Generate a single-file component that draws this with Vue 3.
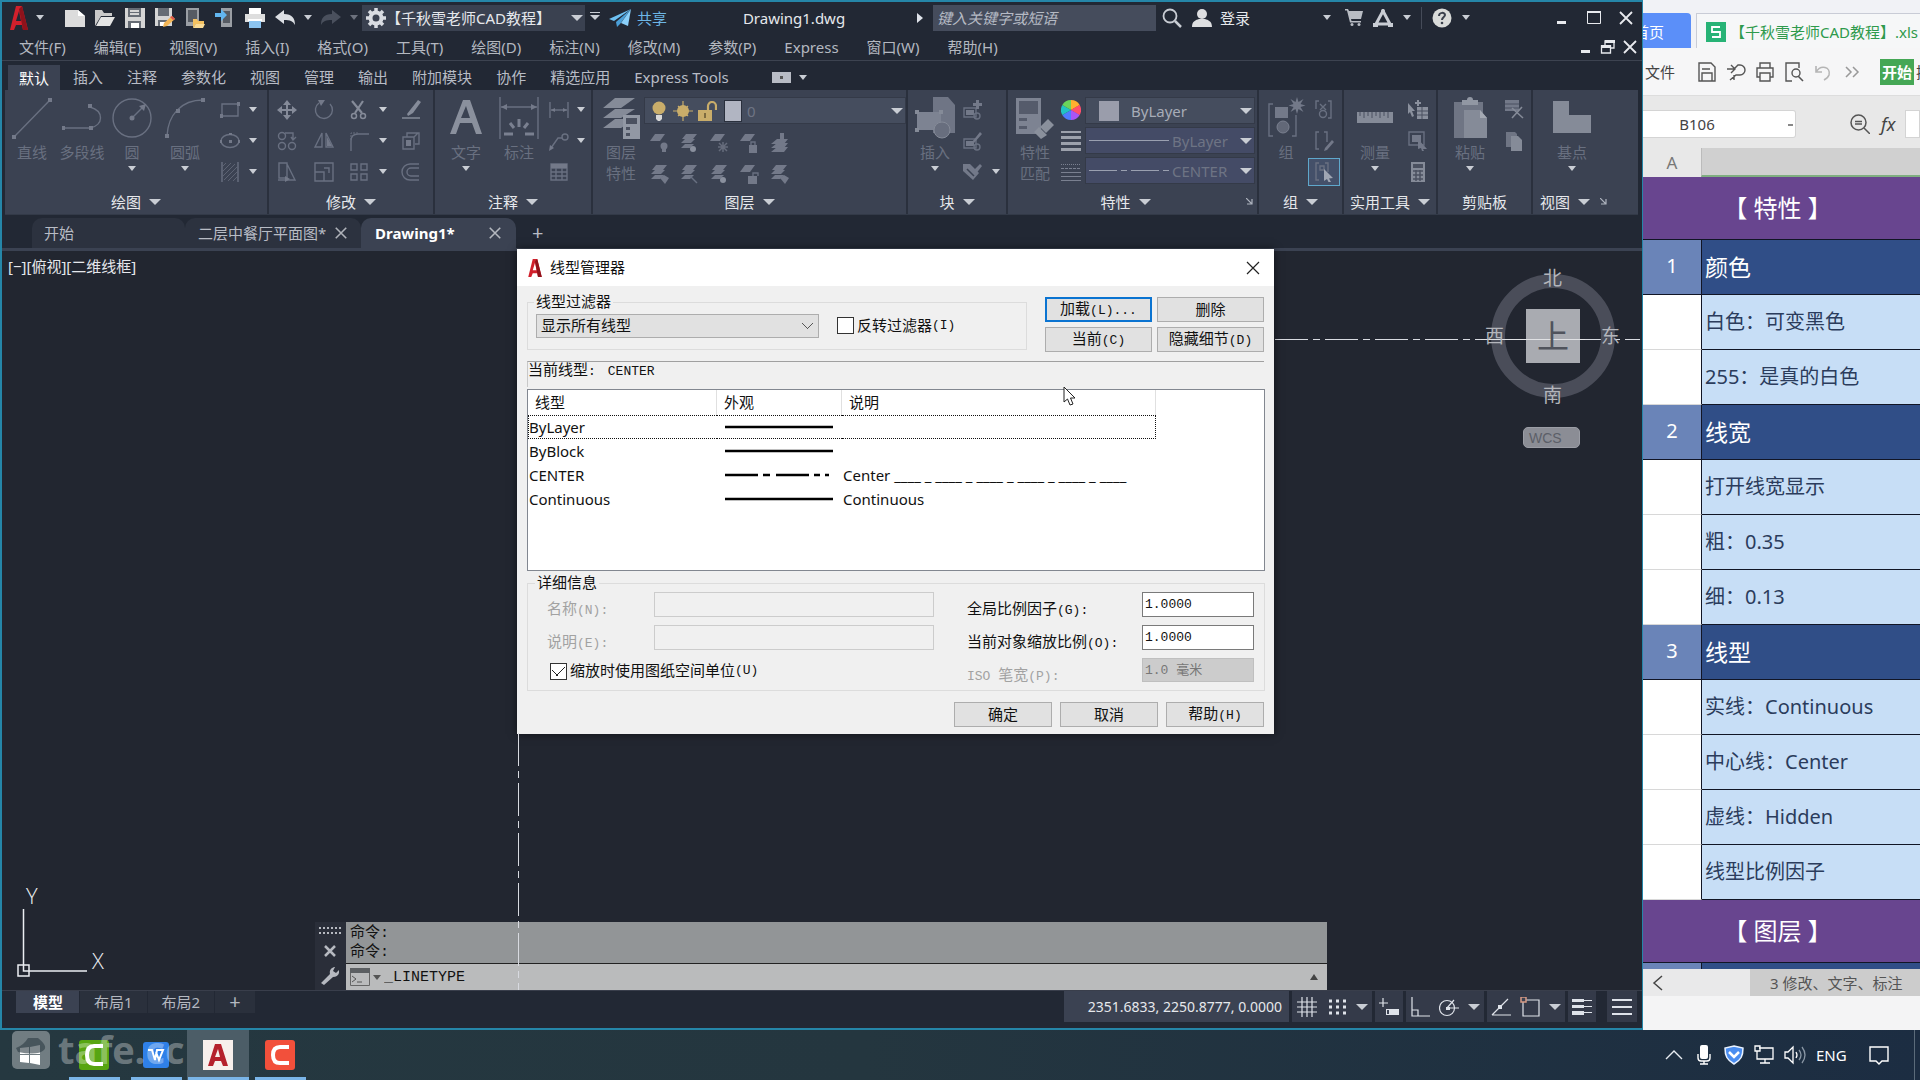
<script setup>
import { h, ref } from 'vue'

const g = 'fill="#737989"'
const s = 'fill="none" stroke="#697081" stroke-width="1.4"'
const w = 'fill="none" stroke="#dfe3ea" stroke-width="1.2"'
const sheets = `<path ${g} d="M7 1h11l-4 5H3zM6 6h10l-4 4H2zM6 11h9l-4 4H2z"/>`
const sheet = `<path ${g} d="M6 1h10l-5 7H1z"/>`

// name: [viewBox width, viewBox height, markup]
const icons = {
  // quick access bar
  logo: [18, 24, '<path fill="#d1202c" d="M6 0h6l6 24h-5l-1-5H6l-2 5H0zM9 5L6 15h5z"/><path fill="#8f121b" d="M12 0l6 24h-5L9 3z"/>'],
  new: [20, 18, '<path fill="#dcdcdc" d="M0 1h13l7 6v11H0z"/><path fill="#fff" d="M13 1v6h7z"/>'],
  open: [20, 18, '<path fill="#c9c9c9" d="M0 17V1h7l2 3h8v3H6z"/><path fill="#e4e4e4" d="M6 8h14l-5 9H1z"/>'],
  save: [20, 20, '<path fill="#d5d5d5" d="M0 0h20v20H0z"/><path fill="#666c75" d="M3 0h13v9H3zM3 13h13v7H3z"/><path fill="#d5d5d5" d="M5 2h9v2H5zM5 5h9v2H5z"/><path fill="#fff" d="M6 15h8v5H6z"/>'],
  saveas: [20, 20, '<path fill="#d5d5d5" d="M0 0h17v18H0z"/><path fill="#666c75" d="M3 0h11v8H3zM3 12h9v6H3z"/><path fill="#fff" d="M5 14h6v4H5z"/><path fill="#f3b656" d="M8 19l1-4 8-7 3 3-8 7z"/><path fill="#e0544c" d="M17 8l3 3-2 1-3-3z"/>'],
  mobile: [20, 20, '<path fill="#9a9ea4" d="M1 0h13v18H1z"/><path fill="#565b63" d="M3 2h9v12H3z"/><path fill="#f3c161" d="M8 20v-9h4l1 2h6v3H11z"/><path fill="#fadb96" d="M11 16h9l-2 4H8z"/>'],
  import: [20, 20, '<path fill="#9a9ea4" d="M6 0h11v19H6z"/><path fill="#565b63" d="M8 3h7v12H8z"/><path fill="#62b6f0" d="M0 5h6V1l6 6-6 6V9H0z"/>'],
  print: [20, 20, '<path fill="#fff" d="M4 0h12v6H4z"/><path fill="#dedede" d="M0 6h20v8H0z"/><path fill="#8cc4f0" d="M4 13h12v7H4z"/><path fill="#fff" d="M3 11h14v2H3z"/>'],
  undo: [20, 16, '<path fill="#dcdfe4" d="M0 7l9-7v4c8 0 11 4 11 11-2-4-5-5-11-5v4z"/>'],
  redo: [20, 16, '<path fill="#4a505d" d="M20 7l-9-7v4C3 4 0 8 0 15c2-4 5-5 11-5v4z"/>'],
  gear: [20, 20, '<circle cx="10" cy="10" r="5.500" fill="none" stroke="#d9dce2" stroke-width="4"/><path stroke="#d9dce2" stroke-width="3.500" d="M10 0v4M10 16v4M0 10h4M16 10h4M3 3l3 3M14 14l3 3M17 3l-3 3M6 14l-3 3"/>'],
  plane: [22, 18, '<path fill="#6dc0f2" d="M22 0L0 10l5 2z"/><path fill="#4a9fd8" d="M22 0L7 13l1 5 3-3z"/><path fill="#8bd0fa" d="M22 0l-3 17-7-3z"/>'],
  search: [20, 20, '<circle cx="8" cy="8" r="6.500" fill="none" stroke="#c9cdd4" stroke-width="1.800"/><path stroke="#c9cdd4" stroke-width="2.500" d="M13 13l6 6"/>'],
  user: [20, 18, '<circle cx="10" cy="5" r="5" fill="#dedfe1"/><path fill="#dedfe1" d="M0 18c0-6 4-7 7-8h6c3 1 7 2 7 8z"/>'],
  cart: [18, 17, '<path fill="#b8bcc3" d="M0 0h3l1 2h14l-2 8H6l.5 2H16v1.500H5L2 1.500H0z"/><circle cx="7" cy="15.500" r="1.500" fill="#b8bcc3"/><circle cx="14" cy="15.500" r="1.500" fill="#b8bcc3"/>'],
  appstore: [20, 18, '<path fill="none" stroke="#c9cdd4" stroke-width="3" d="M10 2L3 15h14z"/><circle cx="10" cy="2" r="2" fill="#c9cdd4"/><path fill="#c9cdd4" d="M0 14h5v4H0zM15 14h5v4h-5z"/>'],
  help: [20, 20, '<circle cx="10" cy="10" r="9.500" fill="#d9dbd9"/><path fill="none" stroke="#3a404c" stroke-width="2" d="M7 8c0-4 6-4 6-1 0 2-3 2-3 5"/><circle cx="10" cy="15" r="1.300" fill="#3a404c"/>'],
  min: [16, 16, '<path fill="#e8eaee" d="M3 11h9v3H3z"/>'],
  max: [16, 16, '<path fill="none" stroke="#e8eaee" d="M1.500 1.500h13v12h-13z"/><path fill="#e8eaee" d="M1 1h14v2H1z"/>'],
  close: [16, 16, '<path fill="none" stroke="#e8eaee" stroke-width="1.800" d="M2 2l12 12M14 2L2 14"/>'],
  restore: [16, 16, '<path fill="none" stroke="#e8eaee" stroke-width="1.300" d="M1.500 7h9v7h-9zM5 6V2h9v7h-3"/><path fill="#e8eaee" d="M1 6h10v3H1zM5 1h10v3H5z"/>'],
  // draw
  line: [40, 42, `<path ${s} d="M2 40L38 3"/><path ${g} d="M0 38h4v4H0zM36 1h4v4h-4z"/>`],
  pline: [40, 42, `<path ${s} d="M0 31h28C42 28 42 14 28 10"/><path ${g} d="M0 29h3v4H0zM27 29h4v4h-4zM26 7h4v4h-4z"/>`],
  circle: [40, 42, `<circle cx="20" cy="21" r="19" ${s}/><path ${s} d="M20 21L32 9"/><circle cx="20" cy="21" r="2.500" ${g}/><path ${g} d="M34 7l-2 7-5-5z"/>`],
  arc: [40, 42, `<path ${s} d="M2 39C3 18 16 3 38 3"/><path ${g} d="M0 37h4v4H0zM11 12h4v4h-4zM36 1h4v4h-4z"/>`],
  rect: [20, 20, `<path ${s} d="M2 4h16v12H2z"/><path ${g} d="M0 14h3v4H0zM17 2h3v4h-3z"/>`],
  ellipse: [20, 20, `<ellipse cx="10" cy="10" rx="9" ry="6.500" ${s}/><path ${g} d="M9 9h3v3H9zM0 9h2v3H0zM18 9h2v3h-2zM9 2h3v2H9z"/>`],
  hatch: [20, 20, `<path ${s} d="M2 0v20M18 0v20"/><path fill="none" stroke="#5d6373" d="M2 5l4-4M2 10l9-9M2 15L15 2M4 18L18 4M8 19l10-10M13 19l5-5"/>`],
  // modify
  move: [20, 20, '<path fill="none" stroke="#858b99" stroke-width="2" d="M10 2v16M2 10h16"/><path fill="#858b99" d="M10 0l4 5H6zM10 20l-4-5h8zM0 10l5-4v8zM20 10l-5 4V6z"/>'],
  rotate: [20, 20, `<path ${s} d="M5 3a8.500 8.500 0 1 0 11 1"/><path ${g} d="M4 0h7l-4 6z"/>`],
  trim: [20, 20, '<path fill="none" stroke="#858b99" stroke-width="2.200" d="M3 1l10 12M14 1L6 13"/><circle cx="5" cy="16" r="2.500" fill="none" stroke="#858b99" stroke-width="1.500"/><circle cx="14" cy="16" r="2.500" fill="none" stroke="#858b99" stroke-width="1.500"/>'],
  erase: [20, 20, '<path fill="#858b99" d="M17 0l3 2-8 11-5 3-1-2z"/><path stroke="#858b99" stroke-width="1.500" d="M1 18h18"/>'],
  copy: [20, 20, `<circle cx="5" cy="5" r="3.500" ${s}/><circle cx="5" cy="15" r="3.500" ${s}/><circle cx="15" cy="15" r="3.500" ${s}/><path ${s} d="M8 2h8v6M14 6l2 3 3-3"/>`],
  mirror: [20, 20, `<path ${s} d="M8 2v14H1zM12 2v14h7z"/><path ${g} d="M13 6l5 9h-5z"/>`],
  fillet: [20, 20, `<path ${s} d="M2 20V10Q2 3 9 3h11"/><path fill="none" stroke="#666c7c" stroke-dasharray="2 1" d="M2 9V2h7"/>`],
  explode: [20, 20, `<path ${s} d="M2 6h11v12H2zM6 6V2h12v11h-4M13 6l4-4"/><path ${g} d="M5 9h5v6H5z"/>`],
  stretch: [20, 20, `<path ${s} d="M2 1h8v15H2zM10 2l8 16H1"/><path ${g} d="M8 14l5 3-5 3z"/>`],
  scale: [20, 20, `<path ${s} d="M1 1h18v18H1zM1 10h9v9M10 6h5v5"/>`],
  array: [20, 20, `<path ${s} d="M2 2h6v6H2zM12 2h6v6h-6zM2 12h6v6H2zM12 12h6v6h-6z"/>`],
  offset: [20, 20, `<path ${s} d="M18 2H9a8 8 0 0 0 0 16h9M18 6H10a4 4 0 0 0 0 8h8"/>`],
  // annotate
  text: [40, 42, '<path fill="#8a909d" d="M17 3h7l12 34h-6l-4-11H14l-4 11H4zM20 9l-5 12h9z"/>'],
  dim: [40, 42, `<path ${s} d="M1 0v42M39 0v42M2 10h36"/><path ${g} d="M2 10l6-3v6zM38 10l-6 3V7z"/><path stroke="#7a8090" stroke-width="3" d="M20 22v8M11 26l4 5M29 26l-4 5M5 37h9M26 37h9"/>`],
  dimlin: [20, 20, `<path ${s} d="M1 2v16M19 2v16M2 10h16"/><path ${g} d="M2 10l4-2v4zM18 10l-4 2V8z"/>`],
  leader: [20, 20, `<path ${s} d="M2 17L9 7h4"/><circle cx="16" cy="6" r="3" ${s}/><path ${g} d="M0 20l1-6 4 3z"/>`],
  table: [20, 20, `<path ${s} d="M2 2h16v16H2zM2 6h16M2 10h16M2 14h16M7 6v12M13 6v12"/><path ${g} d="M2 2h16v4H2z"/>`],
  // layers
  layers: [40, 42, '<path fill="#858b98" d="M14 1h20l-14 10H2zM14 12h20l-14 9H2zM14 22h20l-14 9H2z"/><path fill="#9298a4" d="M22 18h17v24H22z"/><path fill="#4b5160" d="M25 21h11v6H25zM25 30h4v3h-4zM25 36h4v3h-4z"/>'],
  bulb: [20, 20, '<circle cx="10" cy="7" r="6.500" fill="#c9ad6a"/><path fill="#d8d8d8" d="M7 14h6v4l-2 2H9l-2-2z"/>'],
  sun: [20, 20, '<circle cx="10" cy="10" r="6" fill="#c9ad6a"/><path stroke="#c9ad6a" stroke-width="1.200" d="M10 0v20M0 10h20M5 5l10 10M15 5L5 15"/>'],
  lock: [20, 20, '<path fill="#c9ad6a" d="M1 9h14v11H1z"/><path fill="none" stroke="#c9ad6a" stroke-width="2.200" d="M11 9V5a4 4 0 0 1 8 0v4"/><path fill="#7d6b40" d="M7 12h2v5H7z"/>'],
  lay1: [20, 20, `${sheet}<circle cx="15" cy="13" r="3.500" ${g}/><path ${g} d="M13 16h4v3h-4z"/>`],
  lay2: [20, 20, `${sheets}<circle cx="14" cy="16" r="3" fill="#8a909e"/>`],
  lay3: [20, 20, `${sheet}<path stroke="#666c7c" stroke-width="1.500" d="M14 9v10M9 14h10M10 10l8 8M18 10l-8 8"/>`],
  lay4: [20, 20, `${sheet}<path ${g} d="M10 12h8v8h-8z"/><path ${s} d="M12 12V9h4v3"/>`],
  lay5: [20, 20, `<path ${g} d="M8 6h11l-4 5H2zM8 10h11l-4 5H2zM8 14h11l-4 5H2z"/><path ${g} d="M11 0h4v6h-4z"/>`],
  lay6: [20, 20, `${sheets}<path ${g} d="M11 14l4-3 5 3-4 6z"/>`],
  lay7: [20, 20, `${sheets}<path ${s} d="M11 12l7 7"/>`],
  lay8: [20, 20, `${sheet}<path ${g} d="M9 12h9v8H9z"/><path ${s} d="M14 12V9h5v3"/>`],
  // block
  insert: [40, 42, '<path fill="#6f7585" d="M18 0h15l7 8v28H18z"/><path fill="#7d8392" d="M2 15h24v18H2z"/><circle cx="27" cy="33" r="8" fill="#686e7e" stroke="#858b98"/><path fill="#858b98" d="M0 13h4v4H0zM0 31h4v4H0zM24 13h4v4h-4z"/>'],
  blk1: [20, 20, `<path ${s} d="M2 8h12v9H2z"/><path ${g} d="M4 10h8v5H4zM14 0h3v3h3v3h-3v3h-3V6h-3V3h3z"/><circle cx="15" cy="16" r="3" ${s}/>`],
  blk2: [20, 20, `<path ${s} d="M2 8h12v9H2z"/><path ${g} d="M4 10h8v5H4zM18 1l2 2-8 9-2-1z"/><circle cx="15" cy="16" r="3" ${s}/>`],
  blk3: [20, 20, `<path ${g} d="M1 2h7l9 9-6 7L1 9z"/><path stroke="#3b4252" stroke-width="1.500" d="M5 7l7 7"/><path ${g} d="M18 2l2 2-7 9-3-3z"/>`],
  // properties
  match: [40, 42, '<path fill="#7d8392" d="M1 1h25v36H1z"/><path fill="#555b6b" d="M4 4h19v13H4zM4 21h8v3H4zM4 29h8v3H4z"/><path fill="#8a909c" d="M33 22l6 6-8 8-6-6zM24 30l8 8-6 4-7-7z"/>'],
  wheel: [20, 20, '<g transform="translate(10 10)"><path fill="#ffb02e" d="M0 0V-10A10 10 0 0 1 8.700-5z"/><path fill="#ff6a3d" d="M0 0L8.700-5V5z"/><path fill="#ff4f6d" d="M0 0L8.700-5A10 10 0 0 1 8.700 5z"/><path fill="#a855f7" d="M0 0L8.700 5A10 10 0 0 1 0 10z"/><path fill="#4f7cff" d="M0 0V10A10 10 0 0 1-8.700 5z"/><path fill="#21c4c4" d="M0 0L-8.700 5A10 10 0 0 1-8.700-5z"/><path fill="#6bd45b" d="M0 0L-8.700-5A10 10 0 0 1 0-10z"/></g>'],
  weights: [20, 20, '<path fill="#9ca1ac" d="M0 0h20v2H0zM0 5h20v3H0zM0 11h20v3H0zM0 17h20v3H0z"/>'],
  types: [20, 20, `<path stroke="#7a8090" stroke-dasharray="1 1" d="M0 2.500h20"/><path stroke="#7a8090" stroke-dasharray="3 1" d="M0 6.500h20"/><path stroke="#7a8090" d="M0 10.500h20M0 14.500h20M0 18.500h20"/>`],
  // groups
  group: [40, 42, `<path ${s} d="M7 7H3v32h4M26 39h4V18"/><path ${g} d="M9 10h13v11H9zM31 0l1.500 5 5-3-3 5 5 1.500-5 1.500 3 5-5-3-1.500 5-1.500-5-5 3 3-5-5-1.500 5-1.500-3-5 5 3z"/><circle cx="17" cy="30" r="6" fill="#626878" stroke="#7a8090"/>`],
  ungroup: [20, 20, `<path ${s} d="M5 1H2v8M14 1h3v17h-3M6 4l6 6M12 4l-6 6"/><circle cx="9" cy="14" r="3.500" ${s}/>`],
  gedit: [20, 20, `<path ${s} d="M5 1H2v17h3M10 1h3v10"/><path ${g} d="M18 9l2 2-7 8-3 1 1-3z"/>`],
  gsel: [20, 20, `<path ${s} d="M5 1H2v17h3M11 1h3v9M6 4h4v4H6z"/><path fill="#a0a6b3" d="M10 7l9 9-4 .5L17 20l-2 1-2-4-3 2z"/>`],
  // utilities
  ruler: [40, 42, '<path fill="#858b98" d="M2 15h36v11H2z"/><path stroke="#4b5160" d="M5 15v4M9 15v6M13 15v4M17 15v6M21 15v4M25 15v6M29 15v4M33 15v6"/>'],
  qsel: [20, 20, '<path fill="#8a909d" d="M0 3l7 8H4l2 5-2 1-2-5-2 2zM9 7h11v12H9zM9 0h2v2h2v2h-2v2H9V4H7V2h2z"/><path stroke="#4b5160" d="M9 11h11M9 15h11M14 7v12"/>'],
  selall: [20, 20, `<path ${s} d="M1 1h15v13H1z"/><path ${g} d="M4 4h9v7H4zM10 8l9 10h-4l1 2-2 0-1-3-3 1z"/>`],
  calc: [20, 20, '<path fill="#858b98" d="M3 0h14v20H3z"/><path fill="#4b5160" d="M5 2h10v4H5z"/><path stroke="#4b5160" stroke-width="1.500" d="M5 9h10M5 13h10M5 17h10M8 8v11M12 8v11"/>'],
  paste: [40, 42, '<path fill="#6f7584" d="M4 5h29v36H4z"/><path fill="#9197a3" d="M12 3h5a3 3 0 0 1 6 0h5v5H12z"/><path fill="#858b98" d="M14 13h16l7 8v20H14z"/><path fill="#a4a9b3" d="M30 13v8h7z"/>'],
  cut: [20, 20, `<path ${g} d="M1 0h14v11H1z"/><path stroke="#4b5160" d="M1 4h14M1 8h14"/><path stroke="#858b98" stroke-width="1.600" fill="none" d="M8 18L18 7M8 8l11 10"/>`],
  pages: [20, 20, '<path fill="#6f7584" d="M2 1h9l2 2v13H2z"/><path fill="#858b98" d="M7 5h7l4 4v11H7z"/>'],
  base: [40, 42, '<path fill="#858b98" d="M1 4h16v14h22v18H1z"/>'],
  // status bar
  grid: [22, 20, `<path ${w} d="M6 0v20M11 0v20M16 0v20M1 5h20M1 10h20M1 15h20"/>`],
  dots: [20, 20, '<path fill="none" stroke="#dfe3ea" stroke-width="3" stroke-dasharray="3 4" d="M2 4h17M2 10h17M2 16h17"/>'],
  snap: [20, 20, `<path ${w} d="M4 1v9M0 6h9"/><path fill="#dfe3ea" d="M7 12h13v6H7z"/><path fill="#3b4252" d="M8 13h2v4H8z"/>`],
  ortho: [20, 20, `<path ${w} d="M2 0v19h18M2 13h6v6"/>`],
  polar: [20, 20, `<circle cx="8" cy="11" r="7.500" ${w}/><path ${w} d="M8 11L15 3M8 11h12"/><path fill="#dfe3ea" d="M7 10h4v3H7z"/>`],
  track: [20, 20, `<path ${w} d="M1 18h19M1 18L17 2"/><path fill="#dfe3ea" d="M7 8h4v4H7z"/>`],
  osnap: [20, 20, `<path ${w} d="M3 3h16v16H3z"/><path fill="#3b4252" stroke="#d89a84" stroke-width="1.500" d="M1 0h5v5H1z"/>`],
  lweight: [20, 20, '<path fill="#dfe3ea" d="M0 2h12v3H0zM0 8h12v3H0zM0 14h12v4H0z"/><path stroke="#dfe3ea" d="M12 3.500h8M12 9.500h8M12 15.500h8"/>'],
  burger: [20, 20, '<path fill="#dfe3ea" d="M0 2h20v2H0zM0 9h20v2H0zM0 16h20v2H0z"/>'],
  // command line
  handle: [22, 8, '<path stroke="#b6b9c0" stroke-width="2" stroke-dasharray="2 2" d="M0 1h22M0 6h22"/>'],
  cmdx: [12, 12, '<path stroke="#b6b9c0" stroke-width="2.500" d="M1 1l10 10M11 1L1 11"/>'],
  wrench: [18, 18, '<path fill="#b6b9c0" d="M0 16L9 7c-1-4 2-7 5-7l-2 4 3 2 3-3c1 4-2 7-6 7l-9 8z"/>'],
  prompt: [20, 18, '<path fill="none" stroke="#666" d="M.5.5h19v17H.5z"/><path fill="#5c5f62" d="M0 0h20v5H0z"/><path fill="none" stroke="#555" d="M2 8l4 3-4 3M7 14h5"/>'],
  // spreadsheet toolbar
  xsave: [20, 20, '<path fill="none" stroke="#555" stroke-width="1.400" d="M2 1h12l4 4v14H2zM5 19v-8h10v8M5 7h8"/>'],
  xexport: [20, 20, '<path fill="none" stroke="#555" stroke-width="1.400" d="M1 7h7l4-4h2a5 5 0 0 1 0 10h-4l-6 5M5 3l4 4-4 4M8 18v-5"/>'],
  xprint: [20, 20, '<path fill="none" stroke="#555" stroke-width="1.400" d="M5 6V1h10v5M5 15H2V6h16v9h-3M5 11h10v8H5z"/>'],
  xview: [20, 20, '<path fill="none" stroke="#555" stroke-width="1.400" d="M8 19H2V1h13v5"/><circle cx="12" cy="11" r="4" fill="none" stroke="#555" stroke-width="1.400"/><path stroke="#555" stroke-width="1.600" d="M14 14l5 5"/>'],
  xundo: [20, 20, '<path fill="none" stroke="#b5b5b5" stroke-width="1.600" d="M3 4v6h6M3 10c5-8 15-5 13 3-1 3-3 4-5 5"/>'],
  xmore: [20, 20, '<path fill="none" stroke="#999" stroke-width="1.500" d="M4 5l5 5-5 5M11 5l5 5-5 5"/>'],
  xzoom: [20, 20, '<circle cx="8.500" cy="8.500" r="7.500" fill="none" stroke="#555" stroke-width="1.500"/><path stroke="#555" stroke-width="1.500" d="M5 7.500h7M5 10h7M14 14l6 6"/>'],
  xs: [20, 20, '<path fill="#27b376" d="M0 0h20v20H0z"/><path fill="none" stroke="#fff" stroke-width="1.800" d="M14 5H6v5h8v5H6"/>'],
  xprev: [12, 18, '<path fill="none" stroke="#444" stroke-width="1.500" d="M10 2L2 9l8 7"/>'],
  // taskbar
  win: [20, 20, '<path fill="#fff" d="M0 3l9-1v7H0zM10 2l10-2v9H10zM0 10h9v8l-9-1zM10 10h10v10l-10-2z"/>'],
  camg: [30, 30, '<rect width="30" height="30" rx="3" fill="#57a511"/><path fill="none" stroke="#fff" stroke-width="4" d="M24 6h-9Q8 6 8 15t7 9h9"/>'],
  wps: [26, 26, '<rect width="26" height="26" rx="3" fill="#2f80e8"/><path fill="none" stroke="#fff" stroke-width="2" d="M5 8h4l3 10 2-10h6l-4 10-3-8"/>'],
  acad: [30, 30, '<path fill="#f7efec" d="M0 0h30v30H0z"/><path fill="#b5202c" d="M12 4h6l7 22h-5l-2-5h-6l-2 5H5zM15 9l-3 8h5z"/>'],
  camr: [30, 30, '<rect width="30" height="30" rx="3" fill="#f2503b"/><path fill="none" stroke="#fff" stroke-width="4" d="M24 7h-9Q8 7 8 15t7 8h9"/>'],
  up: [20, 20, '<path fill="none" stroke="#e9edf2" stroke-width="1.400" d="M2 14l8-8 8 8"/>'],
  mic: [20, 20, '<rect x="6" y="0" width="8" height="14" rx="2" fill="#fff"/><path fill="none" stroke="#fff" stroke-width="1.400" d="M4 9v4q0 3 3 3h6q3 0 3-3V9M10 16v3M6 19h8"/>'],
  shield: [20, 20, '<path fill="#4a8df0" stroke="#e9f2ff" stroke-width="1.500" d="M10 1l9 2c0 8-2 12-9 16C3 15 1 11 1 3z"/><path fill="none" stroke="#fff" stroke-width="2.500" d="M5 7l5 5 5-5"/>'],
  net: [20, 20, '<path fill="none" stroke="#fff" stroke-width="1.300" d="M5 3h14v11H3V8M11 14v4M6 18h10M1 1h5v5H1zM3 6v4"/>'],
  sound: [22, 20, '<path fill="none" stroke="#fff" stroke-width="1.300" d="M1 7h3l5-5v16l-5-5H1zM12 7q2 3 0 6"/><path fill="none" stroke="#8a97a5" stroke-width="1.300" d="M15 5q4 5 0 10M18 2q6 8 0 16"/>'],
  note: [20, 20, '<path fill="none" stroke="#fff" stroke-width="1.400" d="M1 2h18v14h-6l-3 3-3-3H1z"/>']
}

const Ico = (p) => {
  const [vw, vh, body] = icons[p.n]
  return h('svg', { viewBox: `0 0 ${vw} ${vh}`, width: p.s || vw, height: p.s || vh, innerHTML: body, 'aria-hidden': 'true' })
}
Ico.props = ['n', 's']

const menus = ['文件(F)', '编辑(E)', '视图(V)', '插入(I)', '格式(O)', '工具(T)', '绘图(D)', '标注(N)', '修改(M)', '参数(P)', 'Express', '窗口(W)', '帮助(H)']
const tabs = ['默认', '插入', '注释', '参数化', '视图', '管理', '输出', '附加模块', '协作', '精选应用', 'Express Tools']

const big = (icon, label, width, arrow) => ({ kind: 'big', icon, label, width, arrow })
const col = (width, ...list) => ({ kind: 'col', width, list })
const arrows = (width, ...list) => ({ kind: 'arrows', width, list })
const panels = [
  { name: '绘图', width: 264, arrow: true, cells: [big('line', ['直线'], 44), big('pline', ['多段线'], 56), big('circle', ['圆'], 44, true), big('arc', ['圆弧'], 62, true), col(28, 'rect', 'ellipse', 'hatch'), arrows(18, 1, 1, 1)] },
  { name: '修改', width: 166, arrow: true, flush: true, cells: [col(36, 'move', 'copy', 'stretch'), col(38, 'rotate', 'mirror', 'scale'), col(32, 'trim', 'fillet', 'array'), arrows(16, 1, 1, 1), col(40, 'erase', 'explode', 'offset')] },
  { name: '注释', width: 158, arrow: true, cells: [big('text', ['文字'], 52, true), big('dim', ['标注'], 54), col(26, 'dimlin', 'leader', 'table'), arrows(18, 1, 1, 0)] },
  { name: '图层', width: 315, arrow: true, cells: [big('layers', ['图层', '特性'], 46), { kind: 'layers' }] },
  { name: '块', width: 100, arrow: true, cells: [big('insert', ['插入'], 44, true), col(30, 'blk1', 'blk2', 'blk3'), arrows(18, 0, 0, 1)] },
  { name: '特性', width: 251, arrow: true, corner: true, cells: [big('match', ['特性', '匹配'], 44), col(28, 'wheel', 'weights', 'types'), { kind: 'props' }] },
  { name: '组', width: 85, arrow: true, cells: [big('group', ['组'], 44), col(32, 'ungroup', 'gedit', 'gsel')] },
  { name: '实用工具', width: 94, arrow: true, cells: [big('ruler', ['测量'], 52, true), col(34, 'qsel', 'selall', 'calc')] },
  { name: '剪贴板', width: 95, cells: [big('paste', ['粘贴'], 54, true), col(34, 'cut', 'pages')] },
  { name: '视图', width: 78, arrow: true, corner: true, cells: [big('base', ['基点'], 68, true)] }
]
const layerTools = ['lay1', 'lay2', 'lay3', 'lay4', 'lay5', 'lay6', 'lay7', 'lay2', 'lay8', 'lay6']

const linetypes = [
  { name: 'ByLayer', dash: '', note: '' },
  { name: 'ByBlock', dash: '', note: '' },
  { name: 'CENTER', dash: '33 5 7 6 33 5 6 5 4 4 6', note: 'Center ____ _ ____ _ ____ _ ____ _ ____ _ ____' },
  { name: 'Continuous', dash: '', note: 'Continuous' }
]

const rows = [
  { t: '【 特性 】', k: 'banner' },
  { n: 1, t: '颜色', k: 'head' },
  { t: '白色：可变黑色' },
  { t: '255：是真的白色' },
  { n: 2, t: '线宽', k: 'head' },
  { t: '打开线宽显示' },
  { t: '粗：0.35' },
  { t: '细：0.13' },
  { n: 3, t: '线型', k: 'head' },
  { t: '实线：Continuous' },
  { t: '中心线：Center' },
  { t: '虚线：Hidden' },
  { t: '线型比例因子' },
  { t: '【 图层 】', k: 'banner' },
  { n: '', t: '', k: 'head' }
]

const invert = ref(false)
const paperUnits = ref(true)
const globalScale = ref('1.0000')
const objectScale = ref('1.0000')
</script>

<template>
  <div class="screen">
    <div class="desktop">
      <main class="cad">
        <header class="titlebar">
          <div class="quick">
            <button class="ib app" aria-label="应用程序"><Ico n="logo" /></button><i class="dn"></i>
            <button v-for="n in ['new', 'open', 'save', 'saveas', 'mobile', 'import', 'print', 'undo']" :key="n" class="ib q" :aria-label="n"><Ico :n="n" /></button>
            <i class="dn slim"></i>
            <button class="ib q redo" aria-label="重做"><Ico n="redo" /></button>
            <i class="dn slim dim"></i>
            <button class="workspace"><Ico n="gear" /><span>【千秋雪老师CAD教程】</span><i class="dn bigger"></i></button>
            <i class="dn bar"></i>
            <a class="share" href="#"><Ico n="plane" />共享</a>
          </div>
          <h1>Drawing1.dwg</h1>
          <div class="find">
            <i class="rt"></i>
            <input type="text" placeholder="键入关键字或短语" aria-label="搜索" />
            <Ico n="search" />
            <button class="login"><Ico n="user" />登录</button>
            <i class="dn"></i>
          </div>
          <div class="services">
            <Ico n="cart" /><Ico n="appstore" /><i class="dn"></i><b class="sep"></b><Ico n="help" /><i class="dn"></i>
          </div>
          <div class="winctl">
            <button class="ib" aria-label="最小化"><Ico n="min" /></button>
            <button class="ib" aria-label="最大化"><Ico n="max" /></button>
            <button class="ib" aria-label="关闭"><Ico n="close" /></button>
          </div>
        </header>

        <nav class="menubar">
          <a v-for="m in menus" :key="m" href="#">{{ m }}</a>
          <div class="docctl">
            <button class="ib" aria-label="最小化图形"><Ico n="min" /></button>
            <button class="ib" aria-label="还原图形"><Ico n="restore" /></button>
            <button class="ib" aria-label="关闭图形"><Ico n="close" /></button>
          </div>
        </nav>

        <nav class="tabs">
          <button v-for="(t, i) in tabs" :key="t" :class="{ on: i === 0 }">{{ t }}</button>
          <span class="mini"></span><i class="dn"></i>
        </nav>

        <section class="ribbon">
          <div v-for="p in panels" :key="p.name" class="panel" :style="{ width: p.width + 'px' }">
            <div class="body" :class="{ flush: p.flush }">
              <template v-for="(c, ci) in p.cells" :key="ci">
                <button v-if="c.kind === 'big'" class="big" :style="{ width: c.width + 'px' }">
                  <Ico :n="c.icon" />
                  <span v-for="l in c.label" :key="l">{{ l }}</span>
                  <i v-if="c.arrow" class="dn"></i>
                </button>
                <div v-else-if="c.kind === 'col'" class="col" :style="{ width: c.width + 'px' }">
                  <button v-for="n in c.list" :key="n" class="ib" :class="{ picked: n === 'gsel' }" :aria-label="n"><Ico :n="n" /></button>
                </div>
                <div v-else-if="c.kind === 'arrows'" class="col" :style="{ width: c.width + 'px' }">
                  <span v-for="(a, ai) in c.list" :key="ai"><i v-if="a" class="dn"></i></span>
                </div>
                <div v-else-if="c.kind === 'layers'" class="stack layerbox">
                  <button class="combo"><Ico n="bulb" /><Ico n="sun" /><Ico n="lock" /><b class="swatch small"></b><span>0</span><i class="dn bigger"></i></button>
                  <div class="tools"><button v-for="(n, i) in layerTools" :key="i" class="ib" :aria-label="n"><Ico :n="n" /></button></div>
                </div>
                <div v-else class="stack">
                  <button class="combo lit"><b class="swatch"></b><span>ByLayer</span><i class="dn bigger"></i></button>
                  <button class="combo blue"><b class="rule"></b><span>ByLayer</span><i class="dn bigger"></i></button>
                  <button class="combo blue"><b class="rule dashed"></b><span>CENTER</span><i class="dn bigger"></i></button>
                </div>
              </template>
            </div>
            <div class="caption" :class="{ cornered: p.corner }">{{ p.name }}<i v-if="p.arrow" class="dn bigger"></i>
              <svg v-if="p.corner" class="corner" width="7" height="7" viewBox="0 0 7 7" aria-hidden="true"><path fill="none" stroke="#aeb3be" stroke-width="1.200" d="M0 0l6 6M6 1v5H1" /></svg>
            </div>
          </div>
        </section>

        <nav class="files">
          <button class="start">开始</button>
          <button class="second">二层中餐厅平面图*<Ico n="close" s="14" /></button>
          <button class="current">Drawing1*<Ico n="close" s="14" /></button>
          <button class="plus">+</button>
        </nav>

        <section class="canvas">
          <p class="view">[−][俯视][二维线框]</p>
          <div class="axis-v"></div>
          <div class="axis-h"></div>
          <div class="cube">
            <svg width="144" height="144" viewBox="0 0 144 144" aria-hidden="true">
              <circle cx="72" cy="72" r="55" fill="none" stroke="#4a4d59" stroke-width="14" />
              <path fill="#a9abb1" d="M45 45h54v54H45z" />
              <path stroke="#e0e1e4" stroke-width="1" d="M0 75.500h104" />
            </svg>
            <span class="n">北</span><span class="w">西</span><span class="e">东</span><span class="s">南</span><strong>上</strong>
          </div>
          <button class="wcs">WCS</button>
          <div class="ucs">
            <svg width="90" height="90" viewBox="0 0 90 90" aria-hidden="true">
              <path fill="none" stroke="#eceef2" stroke-width="1.500" d="M1 70h11v11H1zM6.500 14v62H70" />
            </svg>
            <span class="y">Y</span><span class="x">X</span>
          </div>
          <div class="command">
            <div class="grip"><Ico n="handle" /><Ico n="cmdx" /><Ico n="wrench" /></div>
            <div class="lines">
              <div class="log">命令:<br />命令:</div>
              <div class="entry"><Ico n="prompt" /><i class="dn"></i><input type="text" value="_LINETYPE" aria-label="命令" /><i class="dn upw"></i></div>
            </div>
          </div>
        </section>

        <footer class="status">
          <button class="on">模型</button><button>布局1</button><button>布局2</button><button class="add">+</button>
          <div class="right">
            <output>2351.6833, 2250.8777, 0.0000</output>
            <div class="grp"><Ico n="grid" /><Ico n="dots" /><i class="dn bigger"></i></div>
            <div class="grp"><Ico n="snap" /></div>
            <div class="grp"><Ico n="ortho" /><Ico n="polar" /><i class="dn bigger"></i></div>
            <div class="grp"><Ico n="track" /><Ico n="osnap" /><i class="dn bigger"></i></div>
            <div class="grp"><Ico n="lweight" /></div>
            <div class="grp last"><Ico n="burger" /></div>
          </div>
        </footer>

        <form class="dialog" role="dialog" aria-label="线型管理器" @submit.prevent>
          <div class="dtitle"><Ico n="logo" s="18" /><span>线型管理器</span>
            <button type="button" aria-label="关闭"><svg width="14" height="14" viewBox="0 0 14 14"><path stroke="#222" stroke-width="1.200" d="M1 1l12 12M13 1L1 13" /></svg></button>
          </div>
          <div class="dtop">
            <fieldset class="filter">
              <legend>线型过滤器</legend>
              <select aria-label="线型过滤器"><option>显示所有线型</option></select>
              <label><input v-model="invert" type="checkbox" />反转过滤器<tt>(I)</tt></label>
            </fieldset>
            <div class="acts">
              <button type="button" class="primary">加载<tt>(L)...</tt></button><button type="button">删除</button>
              <button type="button">当前<tt>(C)</tt></button><button type="button">隐藏细节<tt>(D)</tt></button>
            </div>
          </div>
          <p class="now">当前线型<tt>:  </tt> <tt>CENTER</tt></p>
          <div class="list">
            <table>
              <thead><tr><th class="c1">线型</th><th class="c2">外观</th><th class="c3">说明</th></tr></thead>
              <tbody>
                <tr v-for="(r, i) in linetypes" :key="r.name" :class="{ focus: i === 0 }">
                  <td>{{ r.name }}</td>
                  <td><svg width="110" height="4" viewBox="0 0 110 4"><path stroke="#000" stroke-width="2.500" :stroke-dasharray="r.dash || null" d="M0 2h108" /></svg></td>
                  <td>{{ r.note }}</td>
                </tr>
              </tbody>
            </table>
          </div>
          <fieldset class="detail">
            <legend>详细信息</legend>
            <div class="left">
              <label class="off" for="d-name">名称<tt>(N):</tt></label><input id="d-name" type="text" disabled />
              <label class="off" for="d-note">说明<tt>(E):</tt></label><input id="d-note" type="text" disabled />
              <label class="tick"><input v-model="paperUnits" type="checkbox" />缩放时使用图纸空间单位<tt>(U)</tt></label>
            </div>
            <div class="scale">
              <label for="d-g">全局比例因子<tt>(G):</tt></label><input id="d-g" v-model="globalScale" type="text" />
              <label for="d-o">当前对象缩放比例<tt>(O):</tt></label><input id="d-o" v-model="objectScale" type="text" />
              <label class="off" for="d-p"><tt>ISO </tt>笔宽<tt>(P):</tt></label><select id="d-p" disabled><option>1.0 毫米</option></select>
            </div>
          </fieldset>
          <div class="dfoot"><button type="submit">确定</button><button type="button">取消</button><button type="button">帮助<tt>(H)</tt></button></div>
        </form>
        <svg class="pointer" width="14" height="20" viewBox="0 0 14 20" aria-hidden="true"><path fill="#fff" stroke="#222" d="M1 1v15l3.500-3L7 19l3-1-2.500-6H12z" /></svg>
      </main>

      <aside class="sheet">
        <div class="booktabs"><a class="home" href="#">首页</a><a class="book" href="#"><Ico n="xs" />【千秋雪老师CAD教程】.xls</a></div>
        <div class="xbar"><span>文件</span><b></b><Ico v-for="n in ['xsave', 'xexport', 'xprint', 'xview', 'xundo', 'xmore']" :key="n" :n="n" /><b></b><button>开始</button><span>插入</span></div>
        <div class="formula"><input type="text" value="B106" aria-label="名称框" /><Ico n="xzoom" /><i>fx</i><span class="fbox"></span></div>
        <div class="cols"><span>A</span><span class="sel"></span></div>
        <div class="cells">
          <table>
            <colgroup><col class="ca" /><col /></colgroup>
            <tbody>
              <tr v-for="(r, i) in rows" :key="i" :class="r.k">
                <td v-if="r.k === 'banner'" colspan="2">{{ r.t }}</td>
                <template v-else><td class="num">{{ r.n }}</td><td>{{ r.t }}</td></template>
              </tr>
            </tbody>
          </table>
        </div>
        <div class="sheettabs"><button class="ib" aria-label="上一个"><Ico n="xprev" /></button><span>3 修改、文字、标注</span></div>
        <div class="xfoot"></div>
      </aside>
    </div>

    <footer class="taskbar">
      <button class="start" aria-label="开始菜单"><Ico n="win" /></button>
      <button class="t" aria-label="Camtasia"><Ico n="camg" /></button>
      <button class="t" aria-label="WPS"><Ico n="wps" /></button>
      <button class="t live" aria-label="AutoCAD"><Ico n="acad" /></button>
      <button class="t" aria-label="Camtasia 录制"><Ico n="camr" /></button>
      <div class="tray">
        <Ico n="up" /><Ico n="mic" /><Ico n="shield" /><Ico n="net" /><Ico n="sound" /><span>ENG</span><Ico n="note" /><b></b>
      </div>
      <div class="mark"><svg width="38" height="38" viewBox="0 0 38 38" aria-hidden="true"><rect width="38" height="38" rx="5" fill="#fff" opacity=".35" /><path fill="#2b3b42" opacity=".6" d="M4 17q8-3 12-10h10q10 8 6 12-6 6-26 2z" /></svg><span>tafe.cc</span></div>
    </footer>
  </div>
</template>

<style>
body { overflow: hidden; background: #222630; }
</style>

<style scoped>
* { box-sizing: border-box; }
.screen { display: flex; flex-direction: column; height: 100vh; font: 15px/20px "Noto Sans", "Noto Sans CJK SC", sans-serif; color: #c9cdd4; }
button { font: inherit; color: inherit; border: 0; background: none; padding: 0; margin: 0; }
input, select { font: inherit; margin: 0; }
a { color: inherit; text-decoration: none; }
p, h1 { margin: 0; }
svg { display: block; flex: none; }
.ib { display: flex; align-items: center; justify-content: center; }
.dn { flex: none; width: 0; height: 0; border: 4px solid transparent; border-top: 5px solid #c9cdd4; border-bottom: 0; }
.dn.bigger { border-width: 6px 6px 0; }
.dn.dim { border-top-color: #6c717d; }
.dn.upw { border-top: 0; border-bottom: 6px solid #444; }
.rt { width: 0; height: 0; border: 5px solid transparent; border-left: 6px solid #dfe3ea; border-right: 0; }

.desktop { flex: 1; min-height: 0; display: flex; }
.cad { position: relative; flex: 1; min-width: 0; display: flex; flex-direction: column; background: #222834; border: 2px solid #2586a8; border-right-width: 1px; }

.titlebar { flex: none; height: 31px; display: flex; align-items: center; }
.quick, .find, .services, .winctl { display: flex; align-items: center; }
.app { width: 34px; }
.quick > .app + .dn { margin: 0 14px 0 0; }
.q { width: 30px; }
.dn.slim { margin: 0 4px; }
.quick .q:nth-of-type(2) { margin-left: 2px; }
.workspace { display: flex; align-items: center; width: 223px; height: 26px; padding: 0 2px 0 4px; background: #3a4150; color: #e6e8ec; }
.workspace span { flex: 1; text-align: left; white-space: nowrap; }
.dn.bar { position: relative; margin: 0 9px 0 5px; border-width: 5px 5px 0; }
.dn.bar::before { content: ""; position: absolute; left: -5px; top: -8px; width: 10px; height: 1px; background: #c9cdd4; }
.share { display: flex; align-items: center; gap: 6px; color: #6db6e6; }
h1 { flex: 1; padding-left: 4px; text-align: center; font-size: 15px; font-weight: 400; color: #e6e8ec; white-space: nowrap; }
.find input { width: 223px; height: 26px; margin: 0 6px 0 10px; padding: 0 4px; border: 0; background: #454c5c; color: #c9cdd4; font-style: italic; }
.find input::placeholder { color: #b5bac4; }
.login { display: flex; align-items: center; gap: 8px; width: 131px; margin-left: 10px; color: #e6e8ec; }
.services { gap: 10px; margin-left: 14px; }
.services .sep { width: 1px; height: 22px; background: #454b58; }
.winctl { gap: 16px; margin: 0 8px 0 84px; }

.menubar { flex: none; display: flex; align-items: center; gap: 28px; height: 28px; padding-left: 17px; border-bottom: 1px solid #3d4350; color: #b4b8c0; white-space: nowrap; }
.docctl { display: flex; gap: 6px; margin: 0 4px 0 auto; }

.tabs { flex: none; display: flex; align-items: flex-end; height: 29px; padding: 0 0 1px 6px; color: #b8bcc5; }
.tabs button { height: 25px; padding: 0 12px; white-space: nowrap; }
.tabs .on { background: #3b4252; color: #fff; padding: 0 11px; margin: 0 1px -1px 0; }
.mini { width: 19px; height: 11px; margin: 0 4px 6px 31px; border: 4px solid #b8bcc5; border-width: 4px 8px; background: #555; }
.tabs .dn { margin: 0 4px 9px; }

.ribbon { flex: none; display: flex; height: 125px; margin: 0 4px 0 3px; background: #3b4252; border-bottom: 1px solid #333a48; }
.panel { flex: none; display: flex; flex-direction: column; border-right: 2px solid #2a303d; }
.panel:last-child { border-right: 0; }
.body { flex: 1; display: flex; padding: 4px 0 0 5px; }
.body.flush { padding-left: 0; }
.big { display: flex; flex-direction: column; align-items: center; padding-top: 3px; color: #697080; line-height: 21px; white-space: nowrap; }
.big svg { margin-bottom: 3px; }
.big .dn { margin-top: 3px; }
.col { display: flex; flex-direction: column; }
.col > * { height: 31px; display: flex; align-items: center; justify-content: center; }
.col .picked { height: 28px; margin-top: 2px; border: 1px solid #5fa8cc; background: #445069; }
.caption { position: relative; display: flex; align-items: center; justify-content: center; gap: 8px; height: 25px; color: #e6e8ec; white-space: nowrap; }
.caption.cornered { padding-right: 14px; }
.corner { position: absolute; right: 4px; top: 9px; }
.stack { flex: 1; display: flex; flex-direction: column; gap: 3px; padding: 3px 2px 0 0; }
.combo { display: flex; align-items: center; height: 27px; padding: 0 2px; background: #454d5e; border: 1px solid #343a48; color: #6e7484; }
.combo .dn { margin-left: auto; }
.combo.lit { color: #a7acb7; }
.combo.blue { background: #444b66; }
.swatch { width: 20px; height: 20px; margin: 0 12px 0 11px; background: #9a9dab; }
.swatch.small { width: 16px; margin: 0 2px 0 4px; background: #b1b5c2; outline: 1px solid #2a303d; }
.rule { width: 80px; height: 1px; margin: 0 3px 0 1px; background: #9aa0b0; }
.rule.dashed { background: linear-gradient(90deg, #9aa0b0 28px, transparent 28px 32px, #9aa0b0 32px 38px, transparent 38px 42px, #9aa0b0 42px 70px, transparent 70px 74px, #9aa0b0 74px); }
.layerbox { padding-right: 0; }
.layerbox .combo { padding-left: 4px; gap: 4px; }
.tools { display: grid; grid-template-columns: repeat(5, 30px); grid-auto-rows: 31px; }

.files { flex: none; display: flex; align-items: flex-end; height: 36px; padding-left: 30px; border-bottom: 3px solid #3b4252; color: #b8bcc5; }
.files button { display: flex; align-items: center; justify-content: space-between; height: 30px; padding: 0 13px; background: #2c323f; border-radius: 10px 10px 0 0; white-space: nowrap; }
.files .start { width: 153px; padding: 0 12px; }
.files .second { width: 176px; }
.files .current { width: 155px; padding: 0 14px; background: #3b4252; color: #fff; font-weight: 700; }
.files svg { opacity: .7; }
.files .plus { padding: 0 16px; background: none; font-size: 20px; }

.canvas { flex: 1; min-height: 0; position: relative; overflow: hidden; background: #222630; }
.view { padding: 5px 6px; color: #e6e8ec; }
.axis-v { position: absolute; z-index: 1; left: 516px; top: 482px; bottom: 0; width: 1px; background: repeating-linear-gradient(#d8dae0 0 33px, transparent 33px 38px, #d8dae0 38px 45px, transparent 45px 50px); }
.axis-h { position: absolute; left: 1273px; right: 2px; top: 88px; height: 1px; background: repeating-linear-gradient(90deg, #d8dae0 0 33px, transparent 33px 38px, #d8dae0 38px 45px, transparent 45px 50px); }
.cube { position: absolute; right: 17px; top: 13px; width: 144px; height: 144px; color: #b3b5bb; font-size: 19px; line-height: 24px; }
.cube span, .cube strong { position: absolute; }
.cube .n { left: 62px; top: 2px; }
.cube .s { left: 62px; top: 119px; }
.cube .w { left: 4px; top: 60px; }
.cube .e { left: 120px; top: 60px; }
.cube strong { left: 56px; top: 56px; font-size: 32px; line-height: 32px; font-weight: 400; color: #50535c; }
.wcs { position: absolute; right: 62px; top: 176px; width: 57px; height: 21px; padding-left: 5px; border-radius: 5px; background: #8b8d95; color: #5c5f68; font: 14px "Liberation Sans", sans-serif; text-align: left; border: 1px solid #9b9da5; }
.ucs { position: absolute; left: 15px; bottom: 5px; width: 90px; height: 100px; color: #eceef2; font: 22px/22px "Open Sans", sans-serif; font-weight: 300; }
.ucs svg { position: absolute; bottom: 0; left: 0; }
.ucs .y { position: absolute; left: 9px; top: -1px; }
.ucs .x { position: absolute; left: 75px; top: 64px; }
.command { position: absolute; left: 313px; right: 315px; bottom: 0; display: flex; }
.grip { display: flex; flex-direction: column; align-items: center; justify-content: space-between; width: 31px; height: 68px; padding: 5px 6px 5px 4px; background: #2a2e39; }
.lines { flex: 1; color: #111; font: 15px/19px "Liberation Mono", "Noto Sans CJK SC", monospace; }
.log { height: 42px; padding: 2px 4px; background: #929597; border-bottom: 1px solid #222; }
.entry { display: flex; align-items: center; height: 26px; padding: 0 6px 0 4px; background: #babbbc; }
.entry .dn { margin: 0 3px; border-top-color: #555; }
.entry input { flex: 1; border: 0; background: none; padding: 0; font-size: 15px; color: #111; }

.status { flex: none; display: flex; align-items: flex-start; height: 38px; padding: 0 5px 0 14px; border-top: 1px solid #393e4b; color: #b4b8c0; }
.status > button { height: 22px; padding: 0 14px; margin-right: 1px; background: #2a303c; }
.status > .on { padding: 0 16px 0 17px; background: #3b4252; color: #fff; font-weight: 700; }
.status > .add { font-size: 20px; }
.right { display: flex; gap: 3px; margin-left: auto; height: 31px; }
.right output { display: flex; align-items: center; justify-content: flex-end; width: 225px; padding-right: 7px; background: #3b4252; color: #e6e8ec; font-size: 14px; white-space: nowrap; }
.grp { display: flex; align-items: center; gap: 9px; padding: 0 4px; background: #343a49; }
.grp.last { margin-left: 8px; padding: 0 5px; }

.dialog { position: absolute; left: 515px; top: 247px; width: 757px; height: 485px; display: flex; flex-direction: column; background: #f0f0f0; color: #111; font: 15px/20px "Liberation Sans", "Noto Sans CJK SC", sans-serif; box-shadow: 0 0 8px #0008; }
tt { font: 13px/20px "Liberation Mono", monospace; white-space: pre; }
.dtitle { display: flex; align-items: center; gap: 6px; height: 37px; padding: 0 14px 0 9px; background: #fff; }
.dtitle button { margin-left: auto; }
.dtop { display: flex; gap: 18px; margin: 7px 10px 0 10px; }
fieldset { margin: 0; padding: 0; border: 1px solid #dcdcdc; min-width: 0; }
legend { padding: 0 2px; margin-left: 7px; line-height: 18px; }
.filter { flex: 1; display: flex; align-items: center; gap: 18px; height: 57px; padding: 0 9px 9px 8px; }
.filter legend { margin-left: -2px; }
select { appearance: none; border-radius: 0; }
.filter select { width: 283px; height: 24px; padding: 0 4px; border: 1px solid #adadad; color: #111; background: linear-gradient(45deg, transparent 46%, #555 46% 58%, transparent 58%) 265px 8px / 6px 6px no-repeat, linear-gradient(-45deg, transparent 46%, #555 46% 58%, transparent 58%) 270px 8px / 6px 6px no-repeat, #e1e1e1; }
label { white-space: nowrap; }
.filter label, .tick { display: flex; align-items: center; }
input[type="checkbox"] { appearance: none; width: 17px; height: 17px; margin-right: 3px; border: 1px solid #333; background: #fff; }
input[type="checkbox"]:checked { background: linear-gradient(45deg, transparent 44%, #222 44% 56%, transparent 56%) 1px 6px / 6px 6px no-repeat, linear-gradient(-45deg, transparent 45%, #222 45% 55%, transparent 55%) 5px 3px / 9px 9px no-repeat, #fff; }
.acts { display: grid; grid-template-columns: 107px 107px; gap: 5px; padding-top: 4px; align-content: start; }
.acts button, .dfoot button { height: 25px; background: #e1e1e1; border: 1px solid #adadad; white-space: nowrap; }
.acts .primary { border: 2px solid #0b74d1; }
.now { height: 26px; margin: 9px 10px 0 10px; border-top: 1px solid #a0a0a0; border-left: 1px solid #c8c8c8; line-height: 16px; }
.now tt { line-height: 16px; }
.list { height: 182px; margin: 2px 9px 0 10px; border: 1px solid #828790; background: #fff; }
.list table { border-collapse: separate; border-spacing: 0; table-layout: fixed; width: 628px; font-family: "Noto Sans", "Noto Sans CJK SC", sans-serif; }
th { height: 25px; padding: 0 7px 2px; border-right: 1px solid #e0e0e0; text-align: left; font-weight: 400; }
.c1 { width: 189px; }
.c2 { width: 125px; }
.list td { height: 24px; padding: 0 1px 1px; white-space: pre; }
.list td:nth-child(2) { padding-left: 8px; }
.focus td { border: 1px dotted #111; border-width: 1px 0; }
.focus td:first-child { border-left-width: 1px; padding-left: 0; }
.focus td:last-child { border-right-width: 1px; }
.detail { display: flex; justify-content: space-between; height: 117px; margin: 3px 9px 0 10px; padding: 0 10px 0 19px; }
.detail legend { margin-left: -12px; }
.left, .scale { display: grid; grid-auto-rows: 26px; row-gap: 7px; align-content: start; }
.left { grid-template-columns: 107px 280px; }
.scale { grid-template-columns: 175px 112px; }
.left > label, .scale > label { align-self: end; margin-bottom: -3px; }
.left input[type="text"], .scale input { height: 25px; padding: 0 2px; border: 1px solid #7a7a7a; background: #fff; font: 13px "Liberation Mono", monospace; color: #111; }
.left input:disabled { border-color: #ccc; background: #f0f0f0; }
.scale select { height: 24px; padding: 0 2px; border: 1px solid #bfbfbf; background: #ccc; color: #777; font: 13px "Liberation Mono", "Noto Sans CJK SC", monospace; opacity: 1; }
.off { color: #a2a2a2; }
.left .tick { grid-column: 1 / 3; align-self: center; margin: 0 0 0 3px; }
.dfoot { display: flex; justify-content: flex-end; gap: 8px; margin: 11px 10px 0; }
.dfoot button { width: 98px; }
.pointer { position: absolute; left: 1061px; top: 384px; }

.sheet { flex: none; width: 277px; display: flex; flex-direction: column; overflow: hidden; background: #f4f5f6; color: #444; white-space: nowrap; }
.booktabs { flex: none; display: flex; align-items: flex-end; height: 48px; background: #f1f2f6; }
.home { width: 48px; height: 35px; direction: rtl; padding-right: 27px; line-height: 38px; background: #5b8ff9; color: #fff; border-radius: 0 4px 0 0; overflow: hidden; }
.book { display: flex; align-items: center; gap: 4px; height: 35px; margin-left: 5px; padding: 1px 0 0 9px; border: 1px solid #c9ccd6; border-width: 1px 0 0 1px; background: #f6f7f8; color: #2e9a4c; flex: 1; }
.xbar { flex: none; display: flex; align-items: center; gap: 9px; height: 47px; padding-left: 2px; background: #f6f6f7; }
.xbar b { width: 1px; height: 30px; margin: 0 1px 0 3px; background: #ddd; }
.xbar button { flex: none; width: 34px; height: 26px; margin-left: -4px; background: #45a755; color: #fff; font-weight: 700; }
.xbar button + span { margin-left: -7px; }
.formula { flex: none; display: flex; align-items: center; height: 52px; padding-top: 4px; background: #e8e8e8; border-top: 1px solid #ddd; }
.formula input { width: 153px; height: 28px; margin-right: 54px; padding: 0 44px 0 0; border: 1px solid #d4d4d4; border-left: 0; border-radius: 0 3px 3px 0; text-align: center; color: #444; background: linear-gradient(#888, #888) 145px 13px / 5px 2px no-repeat, #fff; }
.formula i { margin-left: 11px; font-size: 18px; color: #444; }
.fbox { flex: 1; height: 28px; margin-left: 10px; background: #fff; border: 1px solid #d4d4d4; }
.cols { flex: none; display: flex; height: 30px; background: #e8e8e8; line-height: 32px; font-size: 17px; }
.cols span { width: 58px; text-align: center; color: #777; }
.cols .sel { flex: 1; margin-top: 1px; background: #d0d0d0; border-bottom: 2px solid #7fae80; border-left: 1px solid #bbb; }
.cells { flex: 1; min-height: 0; overflow: hidden; }
.cells table { width: 277px; border-collapse: separate; border-spacing: 0; table-layout: fixed; font-size: 20px; line-height: 26px; color: #2b3c5c; }
.ca { width: 59px; }
.cells td { height: 55px; padding: 0 0 1px 3px; background: #c7def6; border-bottom: 1px solid #111525; }
.cells .num { padding: 0 0 2px; text-align: center; background: #fff; color: #fff; border-right: 1px solid #111525; border-bottom-color: #d8d8d8; }
.cells .head td { background: #304e87; color: #fff; font-size: 23px; border-bottom-color: #111525; }
.cells .head .num { background: #6a84b8; font-size: 20px; }
.cells .banner td { height: 63px; padding: 0 8px 0 0; background: #68458f; color: #fff; text-align: center; font-size: 24px; }
.sheettabs { flex: none; display: flex; align-items: stretch; height: 27px; background: #e9e9ea; }
.sheettabs button { width: 30px; }
.sheettabs span { flex: 1; margin-left: 77px; padding: 4px 0 0 20px; background: #ccc; color: #555; }
.xfoot { flex: none; height: 34px; background: #f4f4f5; }

.taskbar { flex: none; position: relative; display: flex; height: 50px; padding-left: 6px; background: linear-gradient(90deg, #253840, #24363f 45%, #1c2d42); color: #fff; }
.taskbar .start { width: 48px; padding-left: 14px; margin-right: 9px; }
.t { display: flex; align-items: center; justify-content: center; width: 62px; padding-right: 1px; background: linear-gradient(#7ab5e8, #7ab5e8) 50% 100% / 51px 3px no-repeat; }
.t.live { background: linear-gradient(#7ab5e8, #7ab5e8) 50% 100% / 61px 3px no-repeat, #4c5d67; }
.tray { display: flex; align-items: center; gap: 10px; margin-left: auto; padding-right: 5px; }
.tray span { width: 32px; }
.tray span + svg { margin: 0 15px 0 11px; }
.tray b { width: 1px; height: 50px; background: #5b6b7a; }
.mark { position: absolute; left: 12px; top: 1px; display: flex; gap: 8px; pointer-events: none; font: 700 38px/36px "Open Sans", sans-serif; color: #ffffff55; }
</style>
